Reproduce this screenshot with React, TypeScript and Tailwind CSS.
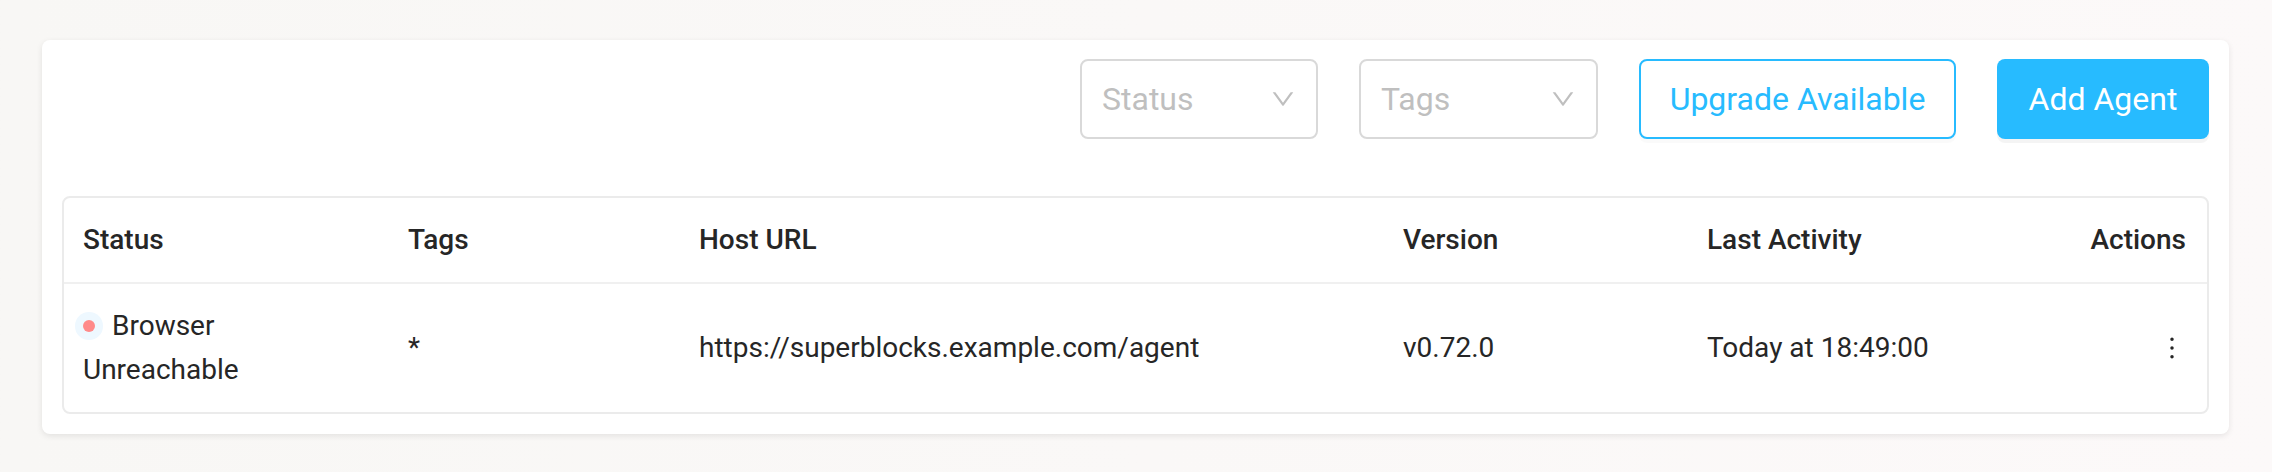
import React from 'react';

const FONT = { fontFamily: 'Roboto, "Noto Sans", Arial, sans-serif' };

function DownIcon() {
  return (
    <svg viewBox="64 64 896 896" className="h-[24px] w-[24px]" fill="#bfbfbf">
      <path d="M884 256h-75c-5.1 0-9.9 2.5-12.9 6.6L512 654.2 227.9 262.6c-3-4.1-7.8-6.6-12.9-6.6h-75c-6.5 0-10.3 7.4-6.5 12.7l352.6 486.1c12.8 17.6 39 17.6 51.7 0l352.6-486.1c3.9-5.3.1-12.7-6.4-12.7z" />
    </svg>
  );
}

function MoreIcon() {
  return (
    <svg viewBox="64 64 896 896" className="h-[28px] w-[28px]" fill="#262626">
      <path d="M456 231a56 56 0 10112 0 56 56 0 10-112 0zm0 280a56 56 0 10112 0 56 56 0 10-112 0zm0 280a56 56 0 10112 0 56 56 0 10-112 0z" />
    </svg>
  );
}

function Select({ placeholder, width }: { placeholder: string; width: string }) {
  return (
    <div className={`${width} flex h-[80px] items-center justify-between rounded-[8px] border-2 border-[#d9d9d9] bg-white pl-[20px] pr-[21px]`}>
      <span className="text-[32px] leading-none text-[#bfbfbf]">{placeholder}</span>
      <DownIcon />
    </div>
  );
}

const columns = [
  { key: 'status', label: 'Status', width: 'w-[324px]' },
  { key: 'tags', label: 'Tags', width: 'w-[291px]' },
  { key: 'host', label: 'Host URL', width: 'w-[704px]' },
  { key: 'version', label: 'Version', width: 'w-[304px]' },
  { key: 'activity', label: 'Last Activity', width: 'w-[320px]' },
  { key: 'actions', label: 'Actions', width: '' },
];

export default function App() {
  return (
    <div className="h-[472px] w-full bg-linear-to-r from-[#f8f7f5] to-[#fcf9f9] pl-[42px] pr-[43px] pt-[40px]" style={FONT}>
      <div className="rounded-[8px] bg-white px-[20px] pb-[20px] pt-[19px] shadow-[0_2px_6px_rgba(0,0,0,0.09)]">
        <div className="flex h-[80px] items-center justify-end gap-[41px]">
          <Select placeholder="Status" width="w-[238px]" />
          <Select placeholder="Tags" width="w-[239px]" />
          <button className="h-[80px] w-[317px] rounded-[8px] border-2 border-[#27bbff] bg-white text-[32px] text-[#27bbff] shadow-[0_4px_0_rgba(0,0,0,0.02)]">
            Upgrade Available
          </button>
          <button className="h-[80px] w-[212px] rounded-[8px] bg-[#27bbff] text-[32px] text-white shadow-[0_4px_0_rgba(0,0,0,0.045)]">
            Add Agent
          </button>
        </div>

        <div className="mt-[57px] overflow-hidden rounded-[8px] border-2 border-[#ebebeb]">
          <table className="w-full table-fixed border-collapse text-[28px] leading-[44px] text-[#262626]">
            <colgroup>
              {columns.map((c) => (
                <col key={c.key} className={c.width} />
              ))}
            </colgroup>
            <thead>
              <tr className="border-b-2 border-[#f0f0f0]">
                {columns.map((c, i) => (
                  <th
                    key={c.key}
                    className={`py-[20px] font-medium ${i === 0 ? 'pl-[19px]' : 'pl-[20px]'} ${c.key === 'actions' ? 'pr-[21px] text-right' : 'pr-[20px] text-left'}`}
                  >
                    {c.label}
                  </th>
                ))}
              </tr>
            </thead>
            <tbody>
              <tr>
                <td className="py-[20px] pl-[19px] pr-[20px] align-middle">
                  <span className="relative -top-[2px] mr-[17px] inline-block h-[12px] w-[12px] rounded-full bg-[#ff8a8a] align-middle shadow-[0_0_0_8px_#eef8ff]" />
                  Browser Unreachable
                </td>
                <td className="px-[20px] py-[20px] align-middle">*</td>
                <td className="px-[20px] py-[20px] align-middle">https://superblocks.example.com/agent</td>
                <td className="px-[20px] py-[20px] align-middle">v0.72.0</td>
                <td className="px-[20px] py-[20px] align-middle">Today at 18:49:00</td>
                <td className="py-[20px] pl-[20px] pr-[21px] align-middle">
                  <div className="flex justify-end">
                    <MoreIcon />
                  </div>
                </td>
              </tr>
            </tbody>
          </table>
        </div>
      </div>
    </div>
  );
}
